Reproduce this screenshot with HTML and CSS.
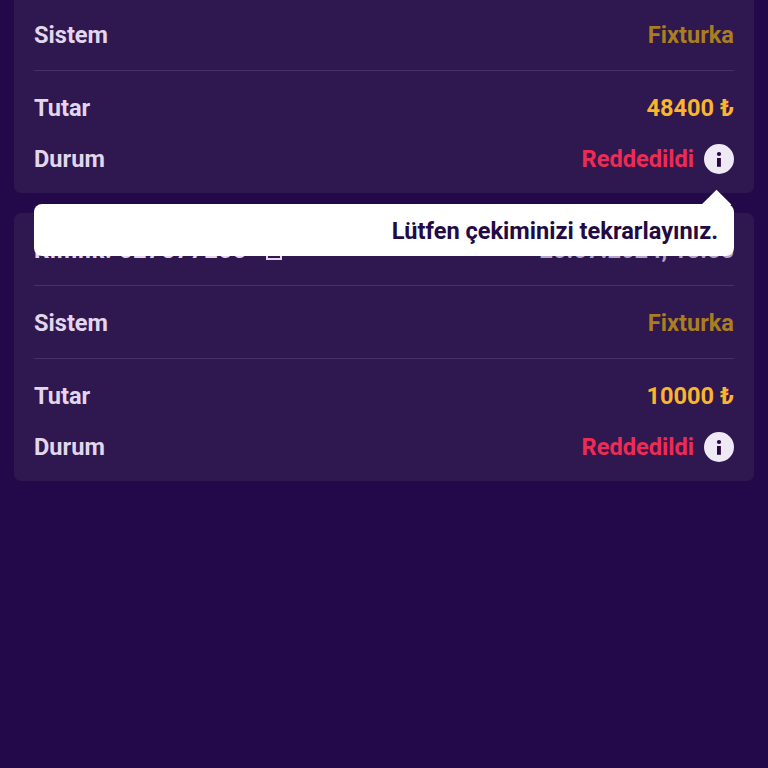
FILE: index.html
```html
<!DOCTYPE html>
<html lang="tr">
<head>
    <meta charset="UTF-8">
    <meta name="viewport" content="width=device-width, initial-scale=1.0">
    <title>Çekim Geçmişi</title>
    <link rel="stylesheet" href="styles.css">
</head>
<body>
    <div class="list">
        <div class="card">
            <div class="row row-top">
                <span class="ref">Kimlik: 527877255
                    <svg class="copy" width="18" height="22" viewBox="0 0 18 22"><path d="M2 4h14v16H2z M6 4V1h6v3" fill="none" stroke="currentColor" stroke-width="2"/></svg>
                </span>
                <span class="date">20.07.2024, 13:55</span>
            </div>
            <div class="row row-top">
                <span class="label">Sistem</span>
                <span class="system">Fixturka</span>
            </div>
            <div class="row row-amount">
                <span class="label">Tutar</span>
                <span class="amount">48400 ₺</span>
            </div>
            <div class="row row-status">
                <span class="label">Durum</span>
                <span class="status">Reddedildi
                    <svg class="info" width="30" height="30" viewBox="0 0 30 30"><circle cx="15" cy="15" r="15" fill="#eee9f4"/><path d="M13 14h3.9v8.8H13z" fill="#230a45"/><circle cx="15" cy="10" r="2.1" fill="#230a45"/></svg>
                </span>
            </div>
            <div class="tooltip">Lütfen çekiminizi tekrarlayınız.</div>
        </div>

        <div class="card">
            <div class="row row-top">
                <span class="ref">Kimlik: 527877255
                    <svg class="copy" width="18" height="22" viewBox="0 0 18 22"><path d="M2 4h14v16H2z M6 4V1h6v3" fill="none" stroke="currentColor" stroke-width="2"/></svg>
                </span>
                <span class="date">20.07.2024, 13:55</span>
            </div>
            <div class="row row-top">
                <span class="label">Sistem</span>
                <span class="system">Fixturka</span>
            </div>
            <div class="row row-amount">
                <span class="label">Tutar</span>
                <span class="amount">10000 ₺</span>
            </div>
            <div class="row row-status">
                <span class="label">Durum</span>
                <span class="status">Reddedildi
                    <svg class="info" width="30" height="30" viewBox="0 0 30 30"><circle cx="15" cy="15" r="15" fill="#eee9f4"/><path d="M13 14h3.9v8.8H13z" fill="#230a45"/><circle cx="15" cy="10" r="2.1" fill="#230a45"/></svg>
                </span>
            </div>
        </div>
    </div>
</body>
</html>
```
FILE: styles.css
```css
html, body{
    height: 100%;
}
body{
    margin: 0;
    overflow: hidden;
    background-color: #23094a;
    font-family: 'Roboto', 'Liberation Sans', sans-serif;
    font-size: 23.6px;
    font-weight: 700;
    color: #e3d6ec;
}
/* the page is scrolled, the first card starts above the window */
.list{
    display: flex;
    flex-direction: column;
    gap: 20px;
    margin: -75px 14px 0;
}
.card{
    position: relative;
    padding: 0 20px 19px;
    background: #2f174f;
    border-radius: 7px;
}
.row{
    display: flex;
    justify-content: space-between;
    align-items: center;
}
.row-top{
    box-sizing: border-box;
    height: 73px;
    padding-top: 2px;
    border-bottom: 1px solid #473068;
}
.row-amount{
    height: 26px;
    padding-top: 24px;
}
.row-status{
    height: 30px;
    padding-top: 23px;
}
.ref{
    display: flex;
    align-items: center;
    gap: 18px;
    letter-spacing: 0.7px;
}
.date{
    color: #b5a5c6;
}
.system{
    color: #a87e1f;
}
.amount{
    color: #fab52b;
}
.status{
    display: flex;
    align-items: center;
    gap: 10px;
    color: #ec2c55;
}
.tooltip{
    position: absolute;
    top: calc(100% + 11px);
    left: 20px;
    right: 20px;
    z-index: 2;
    height: 52px;
    line-height: 55px;
    padding-right: 16px;
    text-align: right;
    background: #fff;
    border-radius: 8px;
    color: #230a45;
}
.tooltip::before{
    content: "";
    position: absolute;
    top: -10px;
    right: 7px;
    width: 21px;
    height: 21px;
    background: #fff;
    transform: rotate(45deg);
}
```
